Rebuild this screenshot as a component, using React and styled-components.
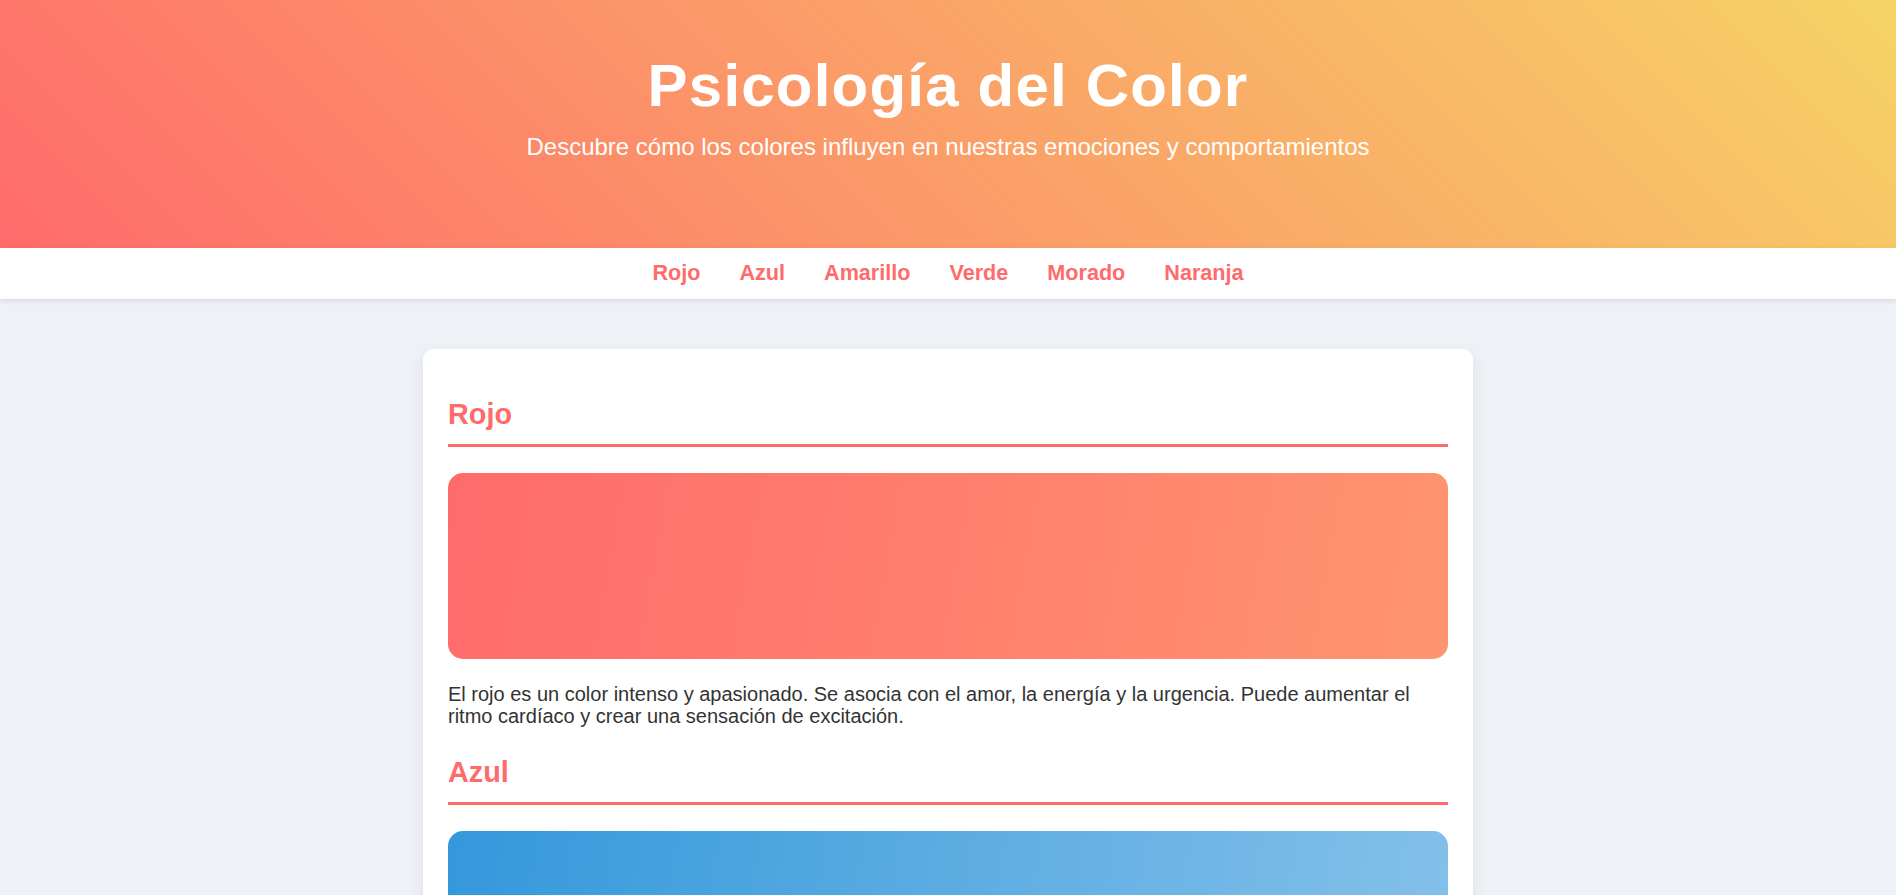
import styled, { createGlobalStyle } from 'styled-components';

const GlobalStyle = createGlobalStyle`
    * {
        box-sizing: border-box;
    }
    body {
        margin: 0;
        background: #eef2f7;
        font-family: "Liberation Sans", Arial, sans-serif;
        color: #333;
    }
`;

const Header = styled.header`
    background: linear-gradient(45deg, #ff6b6b 0%, #f6d365 100%);
    color: #fff;
    text-align: center;
    padding: 51px 20px 87px;
    h1 {
        margin: 0;
        font-size: 60px;
        font-weight: bold;
        letter-spacing: 1.2px;
    }
    p {
        margin: 13px 0 0;
        font-size: 24px;
    }
`;

const Nav = styled.nav`
    display: flex;
    justify-content: center;
    gap: 39px;
    background: #fff;
    padding: 13px 0 14px;
    box-shadow: 0 2px 5px rgba(0, 0, 0, 0.1);
    position: relative;
    a {
        color: #ff6b6b;
        font-size: 21.6px;
        font-weight: bold;
        line-height: 24px;
        text-decoration: none;
    }
`;

const Card = styled.main`
    width: 1050px;
    margin: 50px auto;
    padding: 49px 25px 25px;
    background: #fff;
    border-radius: 10px;
    box-shadow: 0 5px 15px rgba(0, 0, 0, 0.08);
`;

const Section = styled.section`
    & + & {
        margin-top: 29px;
    }
    h2 {
        margin: 0;
        padding-bottom: 13px;
        border-bottom: 3px solid #ff6b6b;
        color: #ff6b6b;
        font-size: 28.8px;
    }
    p {
        margin: 0;
        font-size: 20px;
        line-height: 21.7px;
    }
`;

const Swatch = styled.div`
    height: 186px;
    margin: 26px 0 25px;
    border-radius: 15px;
    background: linear-gradient(100deg, ${({$from}) => $from}, ${({$to}) => $to});
`;

const colors = [
    {
        name: 'Rojo',
        from: '#ff6b6b',
        to: '#ff9470',
        text: 'El rojo es un color intenso y apasionado. Se asocia con el amor, la energía y la urgencia. Puede aumentar el ritmo cardíaco y crear una sensación de excitación.'
    },
    {
        name: 'Azul',
        from: '#3498db',
        to: '#85c1e9',
        text: 'El azul transmite calma, confianza y serenidad. Se asocia con el cielo y el mar, y suele utilizarse para generar sensación de seguridad y profesionalismo.'
    },
    {
        name: 'Amarillo',
        from: '#f1c40f',
        to: '#f9e79f',
        text: 'El amarillo es el color de la alegría y el optimismo. Estimula la mente y llama la atención, aunque en exceso puede generar ansiedad.'
    },
    {
        name: 'Verde',
        from: '#27ae60',
        to: '#82e0aa',
        text: 'El verde representa la naturaleza, el equilibrio y el crecimiento. Es un color relajante que transmite frescura y armonía.'
    },
    {
        name: 'Morado',
        from: '#8e44ad',
        to: '#c39bd3',
        text: 'El morado se asocia con la creatividad, el misterio y la espiritualidad. Históricamente ha sido el color de la realeza y el lujo.'
    },
    {
        name: 'Naranja',
        from: '#e67e22',
        to: '#f5b041',
        text: 'El naranja combina la energía del rojo y la alegría del amarillo. Transmite entusiasmo, calidez y creatividad.'
    }
];

function App() {
    return (
        <>
            <GlobalStyle/>
            <Header>
                <h1>Psicología del Color</h1>
                <p>Descubre cómo los colores influyen en nuestras emociones y comportamientos</p>
            </Header>
            <Nav>
                {colors.map(c => (
                    <a key={c.name} href={`#${c.name.toLowerCase()}`}>{c.name}</a>
                ))}
            </Nav>
            <Card>
                {colors.map(c => (
                    <Section key={c.name} id={c.name.toLowerCase()}>
                        <h2>{c.name}</h2>
                        <Swatch $from={c.from} $to={c.to}/>
                        <p>{c.text}</p>
                    </Section>
                ))}
            </Card>
        </>
    );
}

export default App;
